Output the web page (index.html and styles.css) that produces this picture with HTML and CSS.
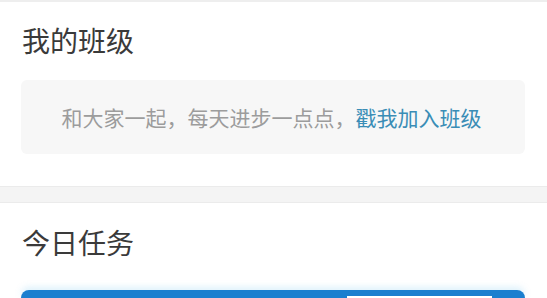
FILE: index.html
```html
<!DOCTYPE html>
<html lang="zh">
<head>
<meta charset="utf-8">
<link rel="stylesheet" href="styles.css">
</head>
<body>
<div class="topline"></div>
<section class="section first">
  <h2 class="title">我的班级</h2>
  <div class="join-box">
    <span class="hint">和大家一起，每天进步一点点，</span><a class="link">戳我加入班级</a>
  </div>
</section>
<div class="divider"></div>
<section class="section second">
  <h2 class="title">今日任务</h2>
  <div class="task-card">
    <div class="task-inner"></div>
  </div>
</section>
</body>
</html>
```
FILE: styles.css
```css
html, body {
  margin: 0;
  padding: 0;
  background: #ffffff;
  overflow: hidden;
  height: 298px;
}
body {
  font-family: "Noto Sans CJK SC", "Noto Sans", sans-serif;
}
.topline {
  height: 2px;
  background: #eeeeee;
}
.section {
  padding: 0 22px 0 21px;
}
.title {
  margin: 0;
  font-size: 28px;
  line-height: 28px;
  font-weight: 400;
  color: #3a3a3a;
  padding-left: 1px;
}
.first .title {
  margin-top: 24px;
}
.join-box {
  margin-top: 26px;
  height: 74px;
  background: #f7f7f7;
  border-radius: 6px;
  display: flex;
  align-items: center;
  justify-content: center;
  font-size: 21px;
  line-height: 21px;
  padding-right: 3px;
}
.hint {
  color: #9c9c9c;
}
.link {
  color: #3a8db6;
}
.divider {
  margin-top: 32px;
  height: 15px;
  background: #f4f4f4;
  border-top: 1px solid #ebebeb;
  border-bottom: 1px solid #ebebeb;
}
.second .title {
  margin-top: 25px;
}
.task-card {
  margin-top: 34px;
  height: 8px;
  background: #1b7fcf;
  border-radius: 8px 8px 0 0;
  box-shadow: 0 -3px 6px rgba(120, 200, 240, 0.25);
  display: flex;
  justify-content: flex-end;
  padding-right: 33px;
}
.task-inner {
  margin-top: 6px;
  width: 145px;
  height: 2px;
  background: #ffffff;
}
```
